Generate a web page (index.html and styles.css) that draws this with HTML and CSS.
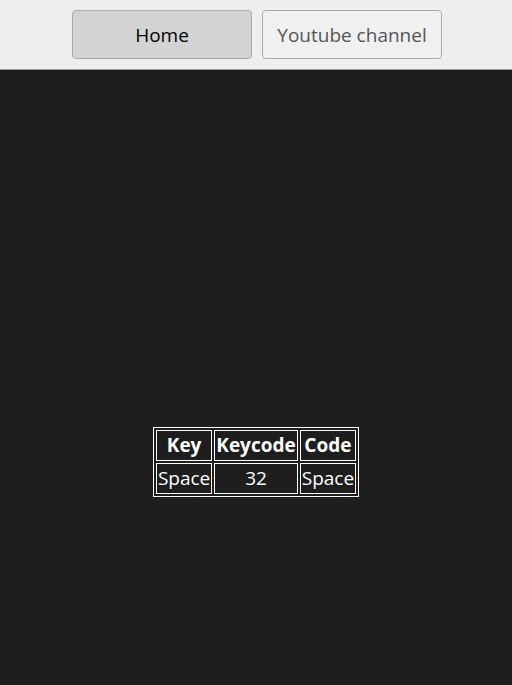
FILE: index.html
```html
<!DOCTYPE html>
<html>
<head>
<meta charset="utf-8">
<link rel="stylesheet" href="styles.css">
</head>
<body>
<header class="topbar">
  <button class="nav-btn active">Home</button>
  <button class="nav-btn">Youtube channel</button>
</header>
<main class="content">
  <table class="keys" border="1">
    <tr><th>Key</th><th>Keycode</th><th>Code</th></tr>
    <tr><td>Space</td><td>32</td><td>Space</td></tr>
  </table>
</main>
</body>
</html>
```
FILE: styles.css
```css
html, body {
  margin: 0;
  padding: 0;
  background: #1e1e1e;
  font-family: "Open Sans", sans-serif;
}
.topbar {
  background: #eeeeee;
  border-bottom: 1px solid #9a9a9a;
  display: flex;
  justify-content: center;
  align-items: flex-start;
  gap: 10px;
  padding: 10px 0 0 2px;
  box-sizing: border-box;
  height: 70px;
}
.nav-btn {
  width: 180px;
  height: 49px;
  border: 1px solid #aaaaaa;
  border-radius: 4px;
  background: #f0f0f0;
  color: #555555;
  font-family: "Open Sans", sans-serif;
  font-size: 19px;
  padding: 1px 0 0;
}
.nav-btn.active {
  background: #d3d3d3;
  color: #000000;
}
.content {
  display: flex;
  justify-content: center;
  padding-top: 357px;
}
.keys {
  border: 1px solid #ffffff;
  border-spacing: 2px;
  color: #ffffff;
  font-size: 19px;
}
.keys th, .keys td {
  border: 1px solid #ffffff;
  padding: 1px 1px;
  line-height: 27px;
  text-align: center;
}
.keys th {
  font-weight: bold;
}
```
